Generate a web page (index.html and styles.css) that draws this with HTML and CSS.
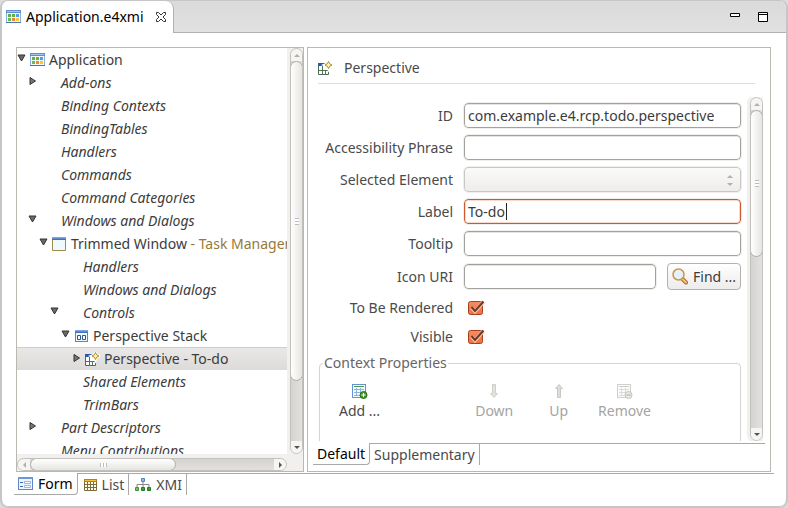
FILE: index.html
```html
<!DOCTYPE html>
<html lang="en">
<head>
<meta charset="utf-8">
<title>Application.e4xmi</title>
<link rel="stylesheet" href="styles.css">
</head>
<body>
<svg class="defs" aria-hidden="true">
  <defs>
    <linearGradient id="blue" x1="0" y1="0" x2="0" y2="1"><stop offset="0" stop-color="#8fb4e6"/><stop offset="1" stop-color="#2f63b4"/></linearGradient>
    <linearGradient id="orange" x1="0" y1="0" x2="0" y2="1"><stop offset="0" stop-color="#f58e66"/><stop offset="1" stop-color="#f0703f"/></linearGradient>
    <symbol id="app" viewBox="0 0 15 14">
      <rect x=".5" y=".5" width="14" height="12" fill="#f2faff" stroke="#8fb0de"/>
      <rect width="15" height="3" fill="#5f8ed0"/><path d="M1 1.500h13" stroke="#a5c6ef"/><path d="M0 12.500h15" stroke="#4674b4"/>
      <path fill="#5fb04c" d="M2 4h3v3H2zM6 4h3v3H6z"/><path fill="#5b9bdc" d="M10 4h3v3h-3z"/>
      <path fill="#6bb85a" d="M2 8h3v3H2z"/><path fill="#f58132" d="M6 8h3v3H6z"/><path fill="#f4c542" d="M10 8h3v3h-3z"/>
    </symbol>
    <symbol id="window" viewBox="0 0 15 14">
      <path d="M.5 3v10.500h13V3" fill="#effaff" stroke="#a08a50"/><path d="M0 0h14v3H0z" fill="url(#blue)"/>
    </symbol>
    <symbol id="stack" viewBox="0 0 15 14">
      <rect x="1.500" y="1.500" width="12" height="11" fill="#f2f8ff" stroke="#5d86bd"/><path d="M1 1h13v3H1z" fill="url(#blue)"/>
      <path d="M3.500 6.500h3v4h-3zM8.500 6.500h3v4h-3z" fill="#fff" stroke="#2b5797"/>
    </symbol>
    <symbol id="persp" viewBox="0 0 15 14">
      <path d="M.5 3.500h10v10H.5z" fill="#fff" stroke="#4c6a55"/><path d="M0 2h8v3H0z" fill="#245bb0"/>
      <path d="M4.500 5v9M1 9.500h10M7.500 9v5" stroke="#54715a" fill="none"/>
      <path d="M10.500 .5l1 2.500 2.500 1-2.500 1-1 2.500-1-2.500L7 4l2.500-1z" fill="#fff" stroke="#fff" stroke-width="3"/>
      <path d="M10.500 .5l1.200 2.300 2.300 1.200-2.300 1.200-1.200 2.300-1.200-2.300L7 4l2.300-1.200z" fill="#fff4b8" stroke="#b48a1c"/>
    </symbol>
    <symbol id="tableadd" viewBox="0 0 16 15">
      <rect x=".5" y=".5" width="13" height="13" fill="#f5faff" stroke="#6692ce"/><path d="M2 2.500h10" stroke="#4c9f50"/>
      <path d="M2 5.500h10M2 8.500h10M2 11.500h8M4.500 4v8M8.500 4v8" stroke="#8db2e2"/>
      <circle cx="11.500" cy="11" r="3.500" fill="#459b27" stroke="#29701a"/><path d="M9.500 11h4M11.500 9v4" stroke="#fff"/>
    </symbol>
    <symbol id="tabledel" viewBox="0 0 16 15">
      <rect x=".5" y=".5" width="13" height="13" fill="#fafafa" stroke="#d0d0cc"/><path d="M2 2.500h10" stroke="#ccc"/>
      <path d="M2 5.500h10M2 8.500h10M2 11.500h8M4.500 4v8M8.500 4v8" stroke="#dcdcd8"/>
      <circle cx="11.500" cy="11" r="3.500" fill="#e8e8e4" stroke="#c4c2ba"/><path d="M9.500 11h4" stroke="#b6aaa0"/>
    </symbol>
    <symbol id="open" viewBox="0 0 9 8"><path d="M1 1h7L4.500 7z" fill="#6a6a6a" stroke="#333"/></symbol>
    <symbol id="shut" viewBox="0 0 9 8"><path d="M2 .5v7L7.500 4z" fill="#777" stroke="#333"/></symbol>
    <symbol id="tick" viewBox="0 0 17 16">
      <rect x=".5" y="1.500" width="14" height="13" rx="2" fill="url(#orange)" stroke="#a9401b"/>
      <path d="M3.500 7.500l3.500 4L15.500 2" fill="none" stroke="#ffc4a8" stroke-width="3.500"/>
      <path d="M3.500 7l3.500 4L15.500 1.500" fill="none" stroke="#68392a" stroke-width="2"/>
    </symbol>
  </defs>
</svg>
<main class="window">
  <header class="titlebar">
    <div class="editor-tab">
      <svg class="app-icon"><use href="#app"/></svg>
      <span>Application.e4xmi</span>
      <button class="plain" aria-label="Close"><svg width="12" height="12" viewBox="0 0 12 12"><path d="M1.500 1.500h2L6 4l2.500-2.500h2v2L8 6l2.500 2.500v2h-2L6 8l-2.500 2.500h-2v-2L4 6 1.500 3.500z" fill="#fff" stroke="#333"/></svg></button>
    </div>
    <div class="window-buttons">
      <button class="plain" aria-label="Minimize"><svg width="10" height="10" viewBox="0 0 10 10"><path d="M.5 1.500h9v3h-9z" fill="#fff" stroke="#000"/></svg></button>
      <button class="plain" aria-label="Maximize"><svg width="10" height="10" viewBox="0 0 10 10"><path d="M.5 .5h9v9h-9zM0 2.500h10" fill="#fff" stroke="#000"/></svg></button>
    </div>
  </header>

  <div class="panes">
    <section class="tree-pane">
      <ul class="tree">
        <li class="l0"><svg class="arrow"><use href="#open"/></svg><span class="slot"><svg class="app-icon"><use href="#app"/></svg></span>Application</li>
        <li class="l1 group"><svg class="arrow"><use href="#shut"/></svg><span class="slot"></span>Add-ons</li>
        <li class="l1 group"><span class="arrow"></span><span class="slot"></span>Binding Contexts</li>
        <li class="l1 group"><span class="arrow"></span><span class="slot"></span>BindingTables</li>
        <li class="l1 group"><span class="arrow"></span><span class="slot"></span>Handlers</li>
        <li class="l1 group"><span class="arrow"></span><span class="slot"></span>Commands</li>
        <li class="l1 group"><span class="arrow"></span><span class="slot"></span>Command Categories</li>
        <li class="l1 group"><svg class="arrow"><use href="#open"/></svg><span class="slot"></span>Windows and Dialogs</li>
        <li class="l2"><svg class="arrow"><use href="#open"/></svg><span class="slot"><svg class="app-icon"><use href="#window"/></svg></span>Trimmed Window<span class="note">&nbsp;- Task Manager</span></li>
        <li class="l3 group"><span class="arrow"></span><span class="slot"></span>Handlers</li>
        <li class="l3 group"><span class="arrow"></span><span class="slot"></span>Windows and Dialogs</li>
        <li class="l3 group"><svg class="arrow"><use href="#open"/></svg><span class="slot"></span>Controls</li>
        <li class="l4"><svg class="arrow"><use href="#open"/></svg><span class="slot"><svg class="app-icon"><use href="#stack"/></svg></span>Perspective Stack</li>
        <li class="l5 selected"><svg class="arrow"><use href="#shut"/></svg><span class="slot"><svg class="app-icon"><use href="#persp"/></svg></span>Perspective - To-do</li>
        <li class="l3 group"><span class="arrow"></span><span class="slot"></span>Shared Elements</li>
        <li class="l3 group"><span class="arrow"></span><span class="slot"></span>TrimBars</li>
        <li class="l1 group"><svg class="arrow"><use href="#shut"/></svg><span class="slot"></span>Part Descriptors</li>
        <li class="l1 group"><span class="arrow"></span><span class="slot"></span>Menu Contributions</li>
      </ul>
      <div class="scroll vertical tree-v">
        <span class="cap"><i class="tri up off"></i></span><span class="thumb"><i class="grip"></i></span><span class="rest"></span><span class="cap"><i class="tri down"></i></span>
      </div>
      <div class="scroll horizontal">
        <span class="cap"><i class="tri left off"></i></span><span class="thumb"><i class="grip"></i></span><span class="rest"></span><span class="cap"><i class="tri right"></i></span>
      </div>
    </section>

    <section class="detail-pane">
      <h1 class="heading"><svg class="app-icon"><use href="#persp"/></svg>Perspective</h1>
      <div class="viewport">
        <form class="form">
          <label for="id">ID</label><input class="field wide" id="id" value="com.example.e4.rcp.todo.perspective">
          <label for="phrase">Accessibility Phrase</label><input class="field wide" id="phrase">
          <label for="selected">Selected Element</label>
          <span class="select-box wide"><select class="field" id="selected" disabled><option></option></select><span class="spin"><i class="tri up off"></i><i class="tri down off"></i></span></span>
          <label for="label">Label</label><span class="edit-box wide"><input class="field focused" id="label" value="To-do"><i class="caret"></i></span>
          <label for="tooltip">Tooltip</label><input class="field wide" id="tooltip">
          <label for="icon">Icon URI</label><input class="field" id="icon">
          <button class="find" type="button"><svg width="16" height="17" viewBox="0 0 16 17"><path d="M10 10.500l4 4" stroke="#a86a25" stroke-width="4" stroke-linecap="round"/><path d="M10 10.500l4 4" stroke="#efc680" stroke-width="2" stroke-linecap="round"/><circle cx="6.500" cy="6.500" r="5.500" fill="#e4f2fb" stroke="#cf9448" stroke-width="1.500"/></svg>Find ...</button>
          <label for="rendered">To Be Rendered</label><span class="check wide"><input type="checkbox" id="rendered" checked><svg><use href="#tick"/></svg></span>
          <label for="visible">Visible</label><span class="check wide"><input type="checkbox" id="visible" checked><svg><use href="#tick"/></svg></span>
          <fieldset class="context">
            <legend>Context Properties</legend>
            <div class="tools">
              <button type="button" class="tool add"><svg><use href="#tableadd"/></svg>Add ...</button>
              <button type="button" class="tool" disabled><svg viewBox="0 0 16 15"><path d="M6.500.5h3v9h2L8 13.500 4.500 9.500h2z" fill="#e2e2df" stroke="#cfcfca"/></svg>Down</button>
              <button type="button" class="tool up-tool" disabled><svg viewBox="0 0 16 15"><path d="M6.500 13.500h3v-9h2L8 .5 4.500 4.500h2z" fill="#dcdcd8" stroke="#c8c8c3"/></svg>Up</button>
              <button type="button" class="tool" disabled><svg><use href="#tabledel"/></svg>Remove</button>
            </div>
          </fieldset>
        </form>
        <div class="scroll vertical form-v">
          <span class="cap"><i class="tri up off"></i></span><span class="thumb"><i class="grip"></i></span><span class="rest"></span><span class="cap"><i class="tri down"></i></span>
        </div>
      </div>
      <nav class="tabs inner-tabs">
        <button class="tab active">Default</button><button class="tab">Supplementary</button><span class="tab-line"></span>
      </nav>
    </section>
  </div>

  <nav class="tabs outer-tabs">
    <button class="tab active"><svg width="15" height="13" viewBox="0 0 15 13"><rect x=".5" y=".5" width="14" height="12" fill="#eef5ff" stroke="#5f86c4"/><path d="M0 0h15v2H0z" fill="#6c97d8"/><path d="M2 5.500h3M2 9.500h3" stroke="#3c66a8"/><path d="M6.500 4.500h6v2h-6zM6.500 8.500h6v2h-6z" fill="#fff" stroke="#9cb5da"/></svg>Form</button>
    <button class="tab"><svg width="13" height="12" viewBox="0 0 13 12"><path d="M.5 2.500h12v9H.5zM.5 5.500h12M.5 8.500h12M3.500 3v8M6.500 3v8M9.500 3v8" fill="#fffbea" stroke="#7a6a3c"/><path d="M0 0h13v3H0z" fill="#c97510"/><path d="M1 1.500h11" stroke="#ffc02f"/></svg>List</button>
    <button class="tab"><svg width="16" height="13" viewBox="0 0 16 13"><path d="M8 4v3M2 9V6.500h12V9M8 6v3" fill="none" stroke="#888"/><path d="M6.500.5h3v3h-3z" fill="#8dbcf2" stroke="#4b83cf"/><path d="M.5 9.500h3v3h-3z" fill="#72c267" stroke="#399438"/><path d="M6.500 9.500h3v3h-3zM12.500 9.500h3v3h-3z" fill="#3f9d39" stroke="#247a22"/></svg>XMI</button>
    <span class="tab-line"></span>
  </nav>
</main>
</body>
</html>
```
FILE: styles.css
```css
* { box-sizing: border-box; }

body {
  margin: 0;
  background: #dcdcdc;
  color: #3c3c3c;
  font: 14px/20px "Noto Sans", "Open Sans", sans-serif;
}

button, input, select { font: inherit; color: inherit; }
ul { margin: 0; padding: 0; list-style: none; }
svg { display: block; flex: none; }
.defs { position: absolute; width: 0; height: 0; }
.app-icon { width: 15px; height: 14px; }
.plain { border: 0; padding: 0; background: none; }

.window {
  display: flex;
  flex-direction: column;
  height: 100vh;
  border: solid #c6c6c6;
  border-width: 1px 2px;
  border-radius: 8px;
  background: #fff;
  overflow: hidden;
  box-shadow: inset 0 -1px #c6c6c6;
}

/* Title bar */
.titlebar {
  display: flex;
  justify-content: space-between;
  height: 32px;
  flex: none;
  border-bottom: 1px solid #b0b0b0;
  background: linear-gradient(#dadada, #e1e1e1);
}
.editor-tab {
  display: flex;
  align-items: center;
  gap: 5px;
  height: 32px;
  padding: 0 6px 0 4px;
  border-right: 1px solid #b0b0b0;
  border-radius: 0 8px 0 0;
  background: #fff;
  color: #000;
}
.editor-tab .plain { margin-left: 6px; }
.window-buttons { display: flex; gap: 18px; padding: 11px 18px 0 0; }
.window-buttons .plain { height: 10px; }

/* Panes */
.panes {
  display: grid;
  grid-template-columns: 288fr 464fr;
  gap: 3px;
  flex: 1;
  min-height: 0;
  padding: 14px 15px 1px 14px;
}
.tree-pane, .detail-pane { border: 1px solid #bab8b0; min-width: 0; min-height: 0; }

.tree-pane {
  display: grid;
  grid-template: minmax(0, 1fr) 17px / minmax(0, 1fr) 16px;
  background: #f1f0ef;
}
.tree { background: #fff; overflow: hidden; }
.tree li {
  display: flex;
  align-items: center;
  height: 23px;
  white-space: nowrap;
}
.l1 { padding-left: 11px; }
.l2 { padding-left: 22px; }
.l3 { padding-left: 33px; }
.l4 { padding-left: 44px; }
.l5 { padding-left: 55px; }
.arrow { width: 9px; height: 8px; margin-bottom: 3px; flex: none; }
.slot { width: 19px; margin-left: 4px; flex: none; }
.group { font-style: italic; }
.group .slot { width: 20px; }
.tree .note { color: #96793a; }
.tree .selected {
  border-top: 1px solid #cfcdcb;
  background: linear-gradient(#e9e8e7, #dcdbda);
}

/* Scroll bars */
.scroll {
  display: flex;
  border: 1px solid #c3c1bc;
  border-radius: 7px;
  overflow: hidden;
}
.vertical { flex-direction: column; width: 13px; justify-self: end; background: linear-gradient(90deg, #d5d3d1, #e2e1df); }
.horizontal { height: 13px; align-self: end; background: linear-gradient(#d5d3d1, #e2e1df); }
.cap { display: grid; place-items: center; flex: 0 0 12px; background: #f6f5f4; }
.thumb {
  display: grid;
  place-items: center;
  border: 1px solid #b0aea9;
  border-radius: 7px;
  background: linear-gradient(90deg, #fff, #e6e5e3);
}
.horizontal .thumb { background: linear-gradient(#fff, #e6e5e3); flex: 145; margin: -1px 0; }
.horizontal .rest { flex: 98; }
.vertical .thumb { margin: 0 -1px; }
.tree-v .thumb { flex: 320; }
.tree-v .rest { flex: 60; }
.form-v .thumb { flex: 148; }
.form-v .rest { flex: 174; }
.vertical .grip { width: 4px; height: 7px; background: repeating-linear-gradient(#bbb 0 1px, #fff 1px 3px); }
.horizontal .grip { width: 7px; height: 4px; background: repeating-linear-gradient(90deg, #bbb 0 1px, #fff 1px 3px); }
.tri { width: 0; height: 0; border: 3px solid transparent; color: #555; }
.off { color: #b0b0b0; }
.up { border-bottom-color: currentColor; border-top: 0; }
.down { border-top-color: currentColor; border-bottom: 0; }
.left { border-right-color: currentColor; border-left: 0; }
.right { border-left-color: currentColor; border-right: 0; }

/* Detail pane */
.detail-pane { display: flex; flex-direction: column; background: #fff; }
.heading {
  display: flex;
  align-items: center;
  gap: 11px;
  height: 36px;
  margin: 0 15px 0 10px;
  padding-top: 4px;
  border-bottom: 1px solid #dedede;
  font-size: 14px;
  font-weight: 400;
  color: #4a4a4a;
  flex: none;
}
.viewport {
  display: grid;
  grid-template-columns: minmax(0, 1fr) 16px;
  grid-template-rows: minmax(0, 1fr);
  flex: 1;
  min-height: 0;
  margin: 13px 7px 2px 11px;
  overflow: hidden;
}
.form-v { box-shadow: 0 0 0 3px #f1f0ef; }
.form {
  display: grid;
  grid-template-columns: 134px minmax(0, 1fr) 74px;
  grid-auto-rows: max-content;
  align-items: center;
  gap: 7px 11px;
  padding: 6px 6px 0 0;
  overflow: hidden;
}
.form label { text-align: right; white-space: nowrap; color: #4a4a4a; }
.wide { grid-column: 2 / 4; }
.field {
  display: block;
  width: 100%;
  height: 25px;
  padding: 0 3px;
  border: 1px solid #a3a19c;
  border-radius: 4px;
  background: #fff;
  outline: 1px solid #f0efee;
  box-shadow: inset 0 1px #e4e3e1;
}
.focused { border-color: #d0592c; box-shadow: inset 0 0 0 1px #f9d9cb; }
.select-box, .edit-box { position: relative; height: 25px; }
.caret { position: absolute; top: 4px; left: 42px; width: 1px; height: 17px; background: #222; }
select.field {
  appearance: none;
  border-color: #c9c7c4;
  background: linear-gradient(#fafaf9, #eeedec);
  box-shadow: none;
  opacity: 1;
}
.spin { position: absolute; top: 8px; right: 8px; display: grid; gap: 5px; pointer-events: none; }
.find {
  display: flex;
  align-items: center;
  gap: 5px;
  height: 27px;
  padding: 0 4px;
  border: 1px solid #b3b1ad;
  border-radius: 4px;
  background: linear-gradient(#fff, #edeceb);
  white-space: nowrap;
}
.check { position: relative; height: 22px; padding: 3px 4px; }
.check input { display: block; appearance: none; margin: 0; width: 17px; height: 16px; }
.check svg { position: absolute; top: 3px; left: 4px; width: 17px; height: 16px; pointer-events: none; }

.context {
  grid-column: 1 / 4;
  min-width: 0;
  height: 120px;
  margin: -2px 0 0;
  padding: 0;
  border: 1px solid #d6d4d1;
  border-radius: 4px;
}
.context legend { margin-left: 3px; padding: 0 1px; color: #666; }
.tools { display: flex; gap: 26px; padding: 11px 89px 0 19px; }
.tool {
  display: flex;
  flex-direction: column;
  align-items: center;
  gap: 2px;
  padding: 0;
  border: 0;
  background: none;
  color: #4a4a4a;
  white-space: nowrap;
}
.tool svg { width: 16px; height: 15px; }
.tool:disabled { color: #a4a4a4; }
.add { margin-right: auto; }
.up-tool { margin: 0 4px 0 10px; }

/* Tabs along the bottom edges */
.tabs { display: flex; flex: none; height: 22px; }
.tab {
  display: flex;
  align-items: center;
  gap: 5px;
  padding: 0 4px;
  border: solid #a9a9a9;
  border-width: 1px 1px 0 0;
  background: #fff;
  color: #4a4a4a;
  white-space: nowrap;
}
.tab.active { border-width: 0 1px 1px 0; border-radius: 0 0 4px 0; color: #000; }
.tab-line { flex: 1; border-top: 1px solid #a9a9a9; }
.inner-tabs { margin: 0 5px 6px; }
.outer-tabs { margin: 0 12px 12px; }
.outer-tabs .tab + .tab { padding-left: 6px; }
```
